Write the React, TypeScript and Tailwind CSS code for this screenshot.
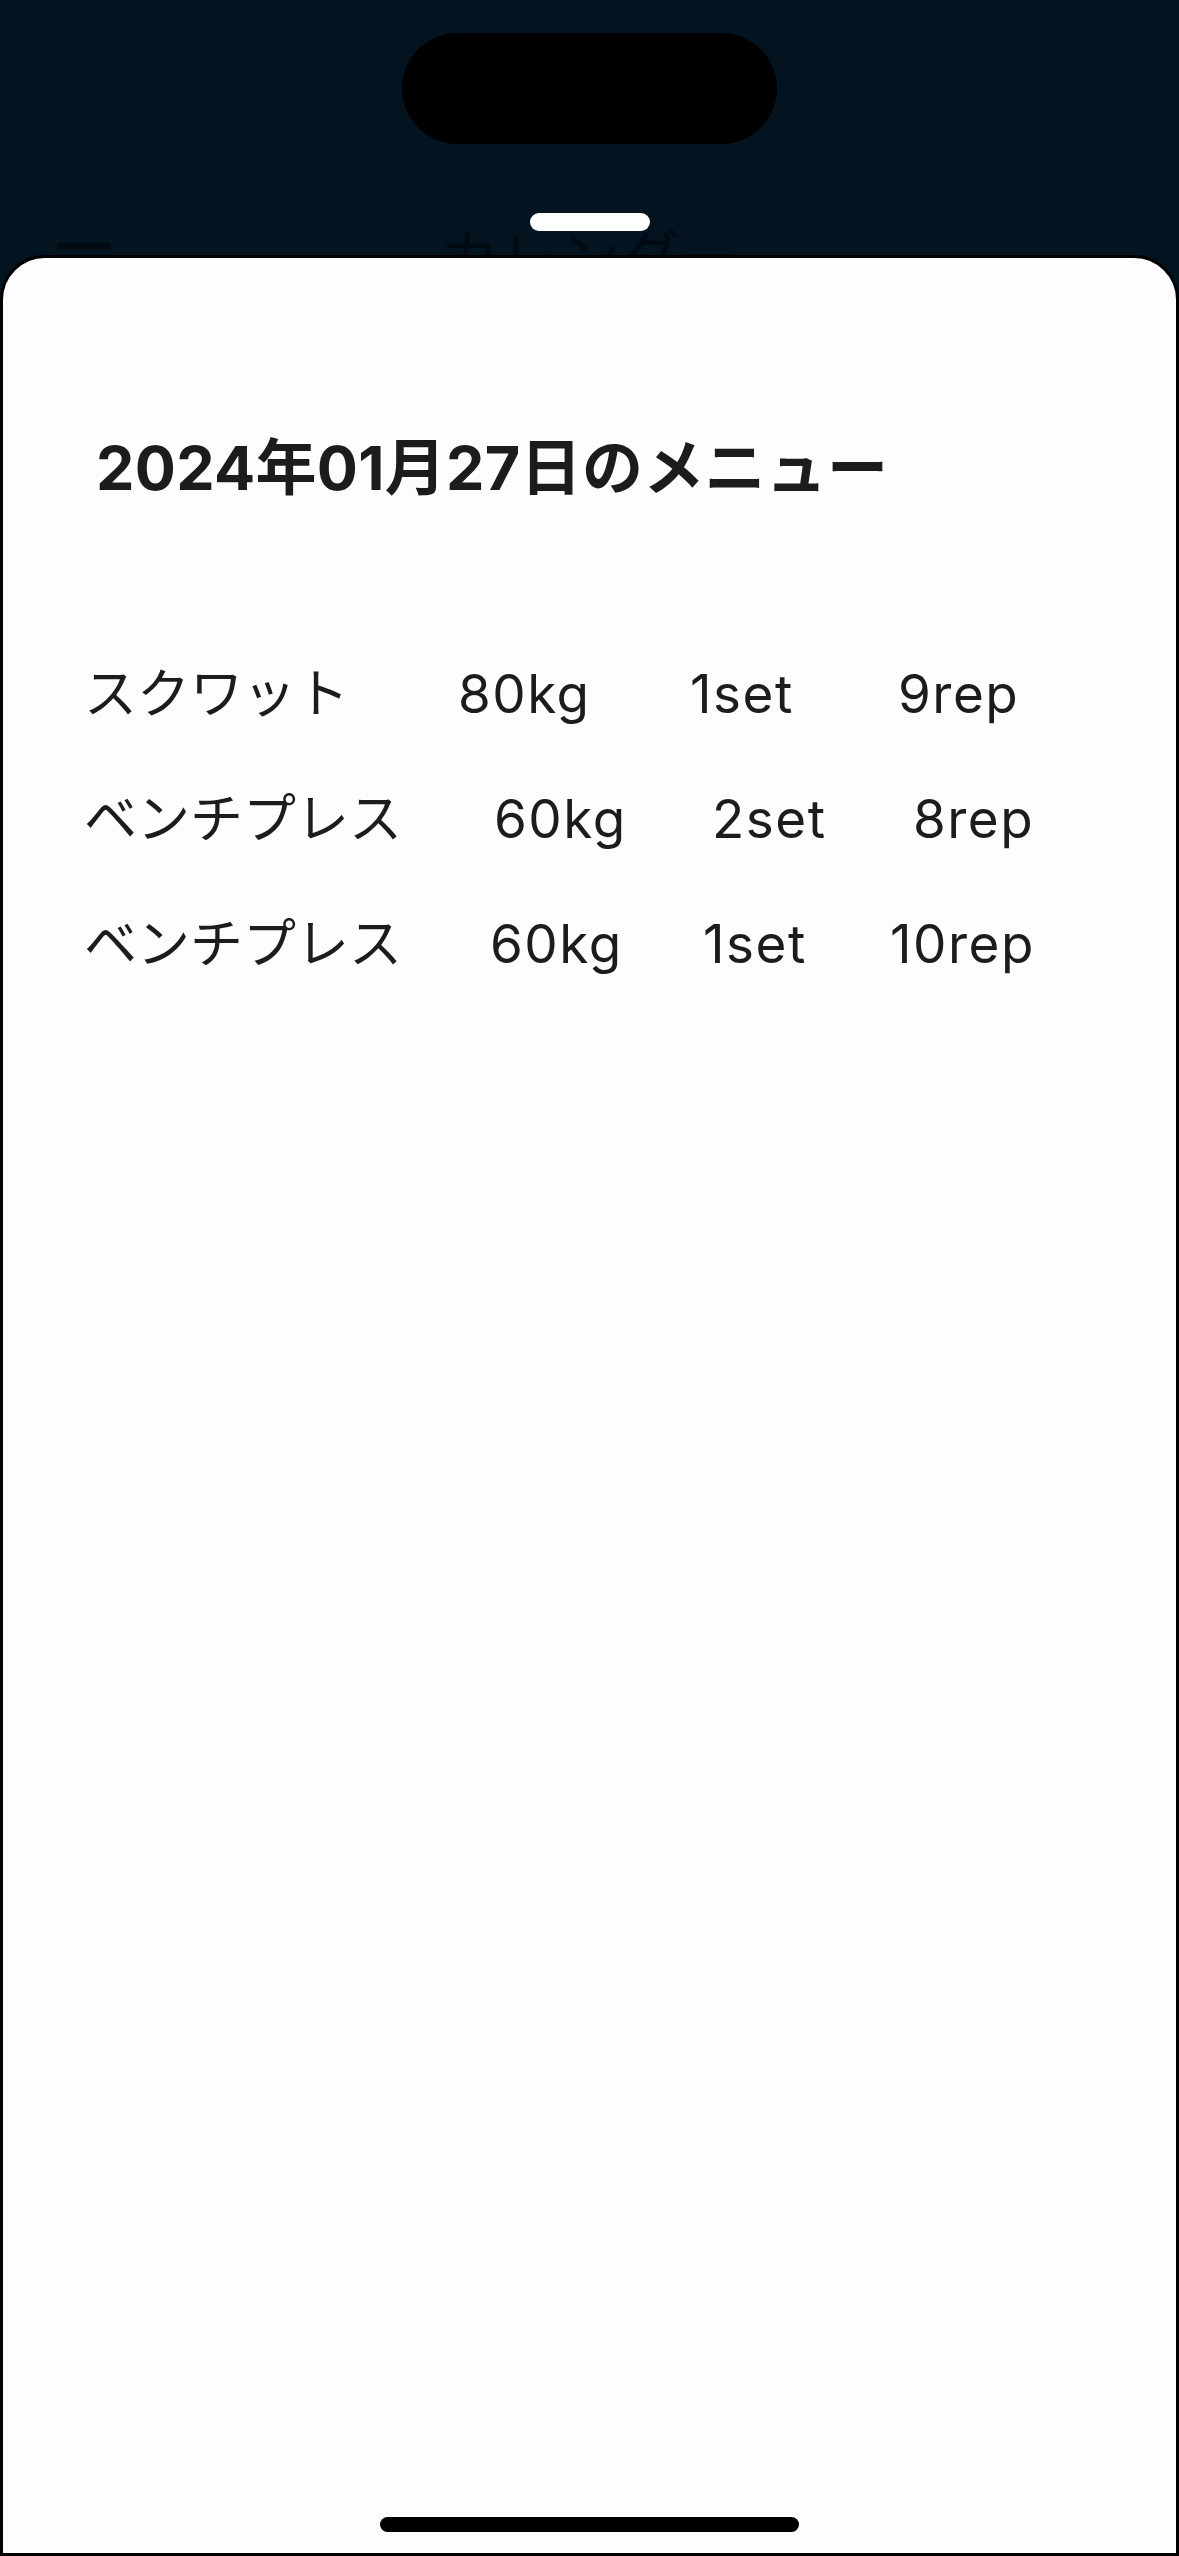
import React from "react";

const rows = [
  { name: "スクワット", weight: "80kg", set: "1set", rep: "9rep", w: ["w-[374px]", "w-[232px]", "w-[208px]"] },
  { name: "ベンチプレス", weight: "60kg", set: "2set", rep: "8rep", w: ["w-[410px]", "w-[218px]", "w-[201px]"] },
  { name: "ベンチプレス", weight: "60kg", set: "1set", rep: "10rep", w: ["w-[406px]", "w-[213px]", "w-[187px]"] },
];

export default function App() {
  return (
    <div
      className="relative w-[1179px] h-[2556px] bg-[#041320] flex flex-col overflow-hidden"
      style={{ fontFamily: 'Inter, "Noto Sans CJK JP", sans-serif' }}
    >
      <div className="relative h-[255px] shrink-0 flex flex-col items-center">
        <div className="mt-[33px] w-[375px] h-[111px] rounded-full bg-black" />
        <div className="mt-[69px] w-[120px] h-[18px] rounded-full bg-white relative z-20" />
        <div className="absolute left-0 right-0 top-[224px] h-[70px]">
          <div className="absolute left-[57px] top-[19px] w-[54px] h-[6px] bg-[#020b14]" />
          <div className="absolute left-[57px] top-[38px] w-[54px] h-[6px] bg-[#020b14]" />
          <div className="text-center text-[60px] leading-none text-[#010a13]" style={{ fontFamily: '"Noto Sans CJK JP", sans-serif' }}>
            カレンダー
          </div>
        </div>
      </div>
      <div className="relative z-10 flex-1 bg-[#fefcff] border-[3px] border-black rounded-t-[45px] text-[#1c1c1e]">
        <div className="pl-[93px] pt-[180px]">
          <h1 className="text-[61px] font-bold leading-none tracking-[0.3px]">2024年01月27日のメニュー</h1>
        </div>
        <div className="pl-[81px] pt-[133px] flex flex-col">
          {rows.map((r, i) => (
            <div key={i} className="flex items-center h-[125px] text-[53px] leading-none">
              <div className={r.w[0]}>{r.name}</div>
              <div className={r.w[1] + " tracking-[1.5px]"}>{r.weight}</div>
              <div className={r.w[2] + " tracking-[1.5px]"}>{r.set}</div>
              <div className="tracking-[1.5px]">{r.rep}</div>
            </div>
          ))}
        </div>
      </div>
      <div className="absolute left-[380px] top-[2517px] w-[419px] h-[15px] rounded-full bg-black z-20" />
    </div>
  );
}
